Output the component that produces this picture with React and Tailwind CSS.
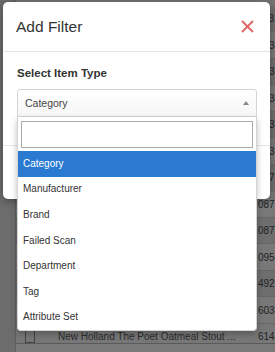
import { useState } from "react";

// rows sit behind the modal; only the last digits of the qty column peek out
const rows = [
  { qty: "113" },
  { qty: "203" },
  { qty: "043" },
  { qty: "553" },
  { qty: "713" },
  { qty: "093" },
  { qty: "617" },
  { qty: "087" },
  { qty: "087" },
  { qty: "095" },
  { qty: "492" },
  { qty: "603" },
];

const itemTypes = [
  "Category",
  "Manufacturer",
  "Brand",
  "Failed Scan",
  "Department",
  "Tag",
  "Attribute Set",
];

const App = () => {
  const [selected, setSelected] = useState("Category");
  const [query, setQuery] = useState("");

  return (
    <div className="relative w-[275px] h-[352px] overflow-hidden bg-[#6c6c6c] font-['Liberation_Sans',Arial,sans-serif] text-[10px] text-[#222]">
      {/* dimmed page behind the modal */}
      <div className="flex h-full">
        <div className="w-[15px] shrink-0" />
        <div className="flex-1 border-l border-[#5e5e5e] flex flex-col">
          <div className="h-[5.75px] shrink-0 bg-[#747474]" />
          {rows.map((row, i) => (
            <div
              key={i}
              className={`h-[26.5px] shrink-0 flex items-center border-b border-[#666] ${
                i % 2 === 0 ? "bg-[#6e6e6e]" : "bg-[#787878]"
              }`}
            >
              <div className="flex-1" />
              <div className="w-[17px] shrink-0">{row.qty}</div>
            </div>
          ))}
          <div className="h-[20px] shrink-0 flex items-end border-b border-[#5a5a5a] bg-[#777]">
            <div className="w-[42px] pl-[9px] self-stretch flex items-end">
              <div className="w-[10px] h-[18px] border border-[#444]" />
            </div>
            <div className="flex-1 truncate leading-[13px] text-[#2b2b2b]">
              New Holland The Poet Oatmeal Stout ...
            </div>
            <div className="w-[17px] shrink-0 leading-[13px]">614</div>
          </div>
          <div className="flex-1 bg-[#7a7a7a]" />
        </div>
      </div>

      {/* modal */}
      <div className="absolute left-[3px] top-[2px] w-[267px] bg-white rounded-[5px] shadow-[0_2px_8px_rgba(0,0,0,0.35)] flex flex-col">
        <div className="h-[50px] flex items-center justify-between pl-[13px] pr-[16px] border-b border-[#e5e5e5]">
          <h2 className="text-[15.5px] leading-[20px] text-[#333]">Add Filter</h2>
          <button className="w-[13px] h-[13px]">
            <svg viewBox="0 0 13 13" className="w-[13px] h-[13px]">
              <path d="M1 1 L12 12 M12 1 L1 12" stroke="#e06464" strokeWidth="1.8" fill="none" />
            </svg>
          </button>
        </div>

        <div className="pl-[14px] pr-[13px] pt-[14px] pb-[28px]">
          <label className="block text-[11.5px] leading-[14px] font-bold text-[#333]">
            Select Item Type
          </label>
          <div className="relative mt-[9px]">
            <div className="h-[28px] flex items-center justify-between pl-[7px] pr-[7px] border border-[#d4d4d4] rounded-t-[3px] bg-gradient-to-b from-white to-[#f6f6f6]">
              <span className="text-[10.5px] leading-[13px] text-[#444]">{selected}</span>
              <svg viewBox="0 0 6 4" className="w-[6px] h-[4px]">
                <path d="M0 4 L3 0 L6 4 Z" fill="#888" />
              </svg>
            </div>

            {/* open dropdown */}
            <div className="absolute left-0 right-0 top-full z-10 bg-white border border-t-0 border-[#d4d4d4] rounded-b-[4px] shadow-[0_3px_6px_rgba(0,0,0,0.25)]">
              <div className="pt-[4px] px-[3px] pb-[3px]">
                <input
                  value={query}
                  onChange={(e) => setQuery(e.target.value)}
                  className="block w-full h-[27px] border border-[#aaa] outline-none px-[4px] text-[10px]"
                />
              </div>
              <ul>
                {itemTypes.map((type) => (
                  <li
                    key={type}
                    onClick={() => setSelected(type)}
                    className={`h-[25.6px] flex items-center pl-[5px] text-[10px] leading-[12px] ${
                      type === selected ? "bg-[#2a7ad2] text-white" : "text-[#333]"
                    }`}
                  >
                    {type}
                  </li>
                ))}
              </ul>
            </div>
          </div>
        </div>

        {/* footer, covered by the open dropdown */}
        <div className="h-[54px] border-t border-[#e5e5e5]" />
      </div>
    </div>
  );
};

export default App;
